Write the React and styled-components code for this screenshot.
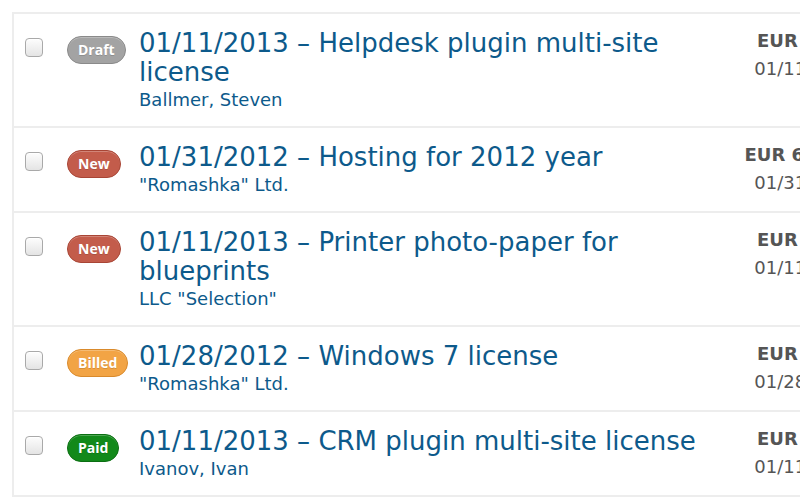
import React from "react";
import styled, { createGlobalStyle } from "styled-components";

const Global = createGlobalStyle`
  html, body { margin: 0; padding: 0; background: #fff; overflow: hidden; }
  body { font-family: "DejaVu Sans", "Open Sans", sans-serif; }
`;

const List = styled.div`
  margin: 12px 0 0 12px;
  width: 900px;
  border-left: 2px solid #ededed;
  border-top: 2px solid #ededed;
`;

const Row = styled.div`
  display: flex;
  align-items: flex-start;
  padding: 15px 0 14px 11px;
  border-bottom: 2px solid #ededed;
`;

const Check = styled.span`
  flex: none;
  width: 16px;
  height: 17px;
  margin-top: 9px;
  border: 1px solid #a9a9a9;
  border-radius: 4px;
  background: linear-gradient(#fdfdfd, #e4e4e4);
  box-shadow: inset 0 1px 1px rgba(255,255,255,0.9);
`;

const BadgeCell = styled.div`
  flex: none;
  width: 72px;
  margin-left: 24px;
  padding-top: 7px;
`;

const colors = {
  Draft: ["#a3a3a3", "#8a8a8a"],
  New: ["#c35c4b", "#a84535"],
  Billed: ["#f2a445", "#d98a2c"],
  Paid: ["#12891a", "#0b6e12"],
};

const Badge = styled.span`
  display: inline-block;
  height: 26px;
  line-height: 26px;
  padding: 0 10px;
  border-radius: 14px;
  border: 1px solid ${(p) => colors[p.$kind][1]};
  background: ${(p) => colors[p.$kind][0]};
  color: #fff;
  font-family: "Open Sans", sans-serif;
  font-weight: 700;
  font-size: 14px;
  text-shadow: 0 1px 0 rgba(0,0,0,0.15);
  box-shadow: inset 0 1px 0 rgba(255,255,255,0.25);
`;

const Main = styled.div`
  flex: none;
  width: 590px;
  color: #0d5a8b;
`;

const Title = styled.div`
  font-size: 26px;
  line-height: 29px;
`;

const Sub = styled.div`
  font-size: 18px;
  line-height: 25px;
`;

const Amount = styled.div`
  flex: none;
  width: 132px;
  margin-top: -2px;
  text-align: right;
  white-space: nowrap;
  color: #555;
  font-size: 18px;
  line-height: 28px;
`;

const Cur = styled.div`
  font-weight: 700;
`;

const Date = styled.div`
  margin-right: 3px;
`;

const rows = [
  { st: "Draft", title: "01/11/2013 – Helpdesk plugin multi-site license", sub: "Ballmer, Steven", amt: "EUR 50.00", date: "01/11/2013" },
  { st: "New", title: "01/31/2012 – Hosting for 2012 year", sub: "\"Romashka\" Ltd.", amt: "EUR 600.00", date: "01/31/2012" },
  { st: "New", title: "01/11/2013 – Printer photo-paper for blueprints", sub: "LLC \"Selection\"", amt: "EUR 20.00", date: "01/11/2013" },
  { st: "Billed", title: "01/28/2012 – Windows 7 license", sub: "\"Romashka\" Ltd.", amt: "EUR 90.00", date: "01/28/2012" },
  { st: "Paid", title: "01/11/2013 – CRM plugin multi-site license", sub: "Ivanov, Ivan", amt: "EUR 50.00", date: "01/11/2013" },
];

export default function App() {
  return (
    <>
      <Global />
      <List>
        {rows.map((r, i) => (
          <Row key={i}>
            <Check />
            <BadgeCell>
              <Badge $kind={r.st}>{r.st}</Badge>
            </BadgeCell>
            <Main>
              <Title>{r.title}</Title>
              <Sub>{r.sub}</Sub>
            </Main>
            <Amount>
              <Cur>{r.amt}</Cur>
              <Date>{r.date}</Date>
            </Amount>
          </Row>
        ))}
      </List>
    </>
  );
}
